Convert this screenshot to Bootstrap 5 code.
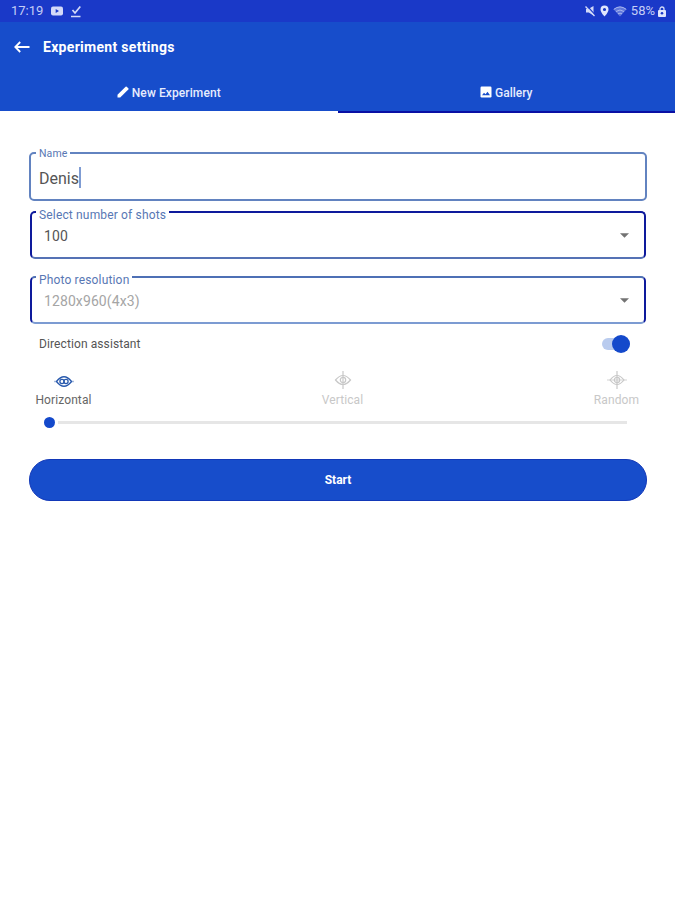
<!DOCTYPE html>
<html lang="en">
<head>
  <meta charset="UTF-8">
  <meta name="viewport" content="width=device-width, initial-scale=1">
  <title>Experiment settings</title>
  <link href="https://cdn.jsdelivr.net/npm/bootstrap@5.3.3/dist/css/bootstrap.min.css" rel="stylesheet">
  <style>
    body { font-family: Roboto, "Noto Sans", sans-serif; background: #fff; color: #555; font-size: 12px; line-height: 16px; }
    svg { display: block; flex: none; }

    .status-bar { height: 22px; background: #1a39c8; color: #c5cef6; font-size: 13px; padding: 0 9px 0 11px; }
    .lock { margin-left: 3px; }
    .app-bar { height: 50px; background: #174dcb; padding-left: 14px; }
    .app-title { font-size: 14px; font-weight: 700; margin: 0 0 0 13px; line-height: 20px; letter-spacing: .3px; }

    .tab-strip { height: 41px; background: #174dcb; }
    .tab-strip .nav-link { height: 41px; padding: 2px 0 0; color: #e6ecfd; font-weight: 500; border-bottom: 2px solid #0a0fa4; border-radius: 0; }
    .tab-strip .nav-link.active { border-bottom-color: #fff; }
    .tab-strip svg { margin-bottom: 2px; }
    .tab-new { letter-spacing: .1px; }

    .settings { padding: 39px 28px 0 29px; }
    .outlined { position: relative; border: 2px solid #6283c0; border-radius: 5px; }
    .outlined label { position: absolute; left: 5px; background: #fff; padding: 0 3px; line-height: 13px; color: #5877b4; white-space: nowrap; }
    .field-name { height: 49px; padding-left: 8px; }
    .field-name label { top: -7px; font-size: 10.5px; letter-spacing: .1px; }
    .field-name .value { font-size: 16px; line-height: 20px; padding-top: 4px; }
    .caret { width: 2px; height: 21px; background: #7f9cd3; margin-top: 2px; }
    .field-select { height: 48px; margin: 0 1px; padding: 0 15px 0 12px; border-color: #0e1a9c #0e1a9c #5572b5; }
    .field-select label { top: -4px; left: 4px; font-size: 12px; letter-spacing: .16px; }
    .field-select .value { font-size: 14px; letter-spacing: .1px; padding-top: 1px; }
    .field-shots { margin-top: 10px; }
    .field-photo { margin-top: 17px; border-top-color: #4e70b5; border-bottom-color: #7c9bd2; }
    .field-photo .value { color: #a5a5a5; }

    .assistant { height: 40px; padding: 0 17px 0 10px; }
    .assistant span { letter-spacing: .1px; }
    .toggle { width: 28px; height: 12px; border-radius: 6px; background: #b9cbee; }
    .toggle i { width: 18px; height: 18px; border-radius: 50%; background: #1449cb; }

    .directions { height: 50px; padding: 7px 2px 0 6px; color: #c8c8c8; }
    .directions > div { width: 57px; }
    .directions .picked { color: #666; }
    .directions .picked svg { color: #2859ad; }
    .directions span { margin-top: 3px; letter-spacing: .1px; }
    .directions .middle { margin-left: 5px; }

    .slider { height: 16px; padding: 0 20px 0 15px; }
    .slider i { width: 11px; height: 11px; border-radius: 50%; background: #1449cb; }
    .slider b { height: 3px; background: #e6e6e6; margin-left: 3px; }

    .btn-start { height: 42px; margin-top: 29px; background: #174dcb; color: #fff; font-size: 12px; font-weight: 700; border: 1px solid #1238b8; border-radius: 21px; }
    .btn-start:hover { background: #1238b8; color: #fff; }
  </style>
</head>
<body>
  <header>
    <div class="status-bar d-flex align-items-center justify-content-between">
      <div class="d-flex align-items-center">
        <span>17:19</span>
        <svg class="ms-2" width="12" height="10" viewBox="0 0 12 10"><rect width="12" height="9" y=".5" rx="2" fill="#d3daf8"/><path d="M4.7 3v4L8 5z" fill="#1a39c8"/></svg>
        <svg class="ms-2" width="10" height="13" viewBox="0 0 10 13" fill="none" stroke="#d3daf8" stroke-width="1.7"><path d="M1.5 5L4 8l5.300-6.500M0 11.500h9.500"/></svg>
      </div>
      <div class="d-flex align-items-center">
        <svg width="11" height="12" viewBox="0 0 11 12"><path d="M1 4h2.300L8.500 1v9.500L3.800 7.500H1z" fill="#d3daf8"/><path d="M1.700.5l9 10" stroke="#1a39c8" stroke-width="1.200"/><path d="M.5 1.500l9 9.500" stroke="#d3daf8" stroke-width="1.300"/></svg>
        <svg class="ms-1" width="9" height="12" viewBox="0 0 9 12"><path d="M4.500.5a4 4 0 0 0-4 4c0 3 4 7 4 7s4-4 4-7a4 4 0 0 0-4-4zm0 2.400a1.600 1.600 0 1 1 0 3.200 1.600 1.600 0 0 1 0-3.200z" fill="#e0e6fc" fill-rule="evenodd"/></svg>
        <svg class="ms-1" width="14" height="11" viewBox="0 0 14 11"><path d="M.5 3.200Q7-2 13.500 3.200L7 10.500z" fill="#6078dc"/><path d="M.8 3.300Q7-1.500 13.200 3.300M3 5.500Q7 2.500 11 5.500M5 7.800Q7 6.500 9 7.800" fill="none" stroke="#a9b7f0"/></svg>
        <span class="ms-1">58%</span>
        <svg class="lock" width="8" height="11" viewBox="0 0 8 11"><path d="M2 5V3a2 2 0 0 1 4 0v2" fill="none" stroke="#d3daf8" stroke-width="1.300"/><rect y="4" width="8" height="7" rx="1" fill="#e0e6fc"/><circle cx="4" cy="7.300" r="1.300" fill="#1a39c8"/></svg>
      </div>
    </div>
    <div class="app-bar d-flex align-items-center text-white">
      <svg width="16" height="12" viewBox="0 0 16 12" fill="none" stroke="#fff" stroke-width="1.800"><path d="M15.500 6H1.500M6.200 1L1.300 6l4.900 5"/></svg>
      <h1 class="app-title">Experiment settings</h1>
    </div>
    <nav class="tab-strip nav nav-fill flex-nowrap">
      <a class="nav-link active w-50 d-flex align-items-center justify-content-center" href="#">
        <svg width="12" height="12" viewBox="0 0 12 12" fill="#fff"><path d="M.5 8.800V11.500h2.700L11.300 3.400a.8.800 0 0 0 0-1.100L9.700.7a.8.800 0 0 0-1.100 0z"/></svg>
        <span class="tab-new">&nbsp;New Experiment</span>
      </a>
      <a class="nav-link w-50 d-flex align-items-center justify-content-center" href="#">
        <svg width="12" height="12" viewBox="0 0 12 12"><rect x=".5" y=".5" width="11" height="11" rx="1.200" fill="#fff"/><path d="M2 9.300l2-2.500 1.500 1.500L7.500 5.800 10 9.300z" fill="#174dcb"/></svg>
        <span>&nbsp;Gallery</span>
      </a>
    </nav>
  </header>

  <main class="settings">
    <div class="outlined field-name d-flex align-items-center">
      <label>Name</label>
      <span class="value">Denis</span><span class="caret"></span>
    </div>
    <div class="outlined field-select field-shots d-flex align-items-center justify-content-between">
      <label>Select number of shots</label>
      <span class="value">100</span>
      <svg width="9" height="5" viewBox="0 0 10 5"><path d="M0 0h10L5 5z" fill="#737373"/></svg>
    </div>
    <div class="outlined field-select field-photo d-flex align-items-center justify-content-between">
      <label>Photo resolution</label>
      <span class="value">1280x960(4x3)</span>
      <svg width="9" height="5" viewBox="0 0 10 5"><path d="M0 0h10L5 5z" fill="#737373"/></svg>
    </div>

    <div class="assistant d-flex align-items-center justify-content-between">
      <span>Direction assistant</span>
      <div class="toggle d-flex align-items-center justify-content-end"><i></i></div>
    </div>

    <div class="directions d-flex justify-content-between">
      <div class="picked d-flex flex-column align-items-center">
        <svg width="20" height="18" viewBox="0 0 20 18" fill="none" stroke="currentColor" stroke-width="1.300"><path d="M2.500 10.500q7.500-9.500 15 0q-7.500 9.500-15 0z"/><circle cx="8" cy="10.500" r="2.100"/><circle cx="12" cy="10.500" r="2.100"/><path d="M0 10.500h3M17 10.500h3" opacity=".4"/></svg>
        <span>Horizontal</span>
      </div>
      <div class="middle d-flex flex-column align-items-center">
        <svg width="20" height="18" viewBox="0 0 20 18" fill="none" stroke="currentColor" stroke-width="1.200"><path d="M2.500 9q7.500-9 15 0q-7.500 9-15 0z"/><circle cx="10" cy="9" r="2.700"/><path d="M10 0v18"/></svg>
        <span>Vertical</span>
      </div>
      <div class="d-flex flex-column align-items-center">
        <svg width="20" height="18" viewBox="0 0 20 18" fill="none" stroke="currentColor" stroke-width="1.200"><path d="M3 9q7-9 14 0q-7 9-14 0z"/><circle cx="10" cy="9" r="2.700"/><path d="M10 0v18"/><path d="M0 9h20" stroke-width=".8"/></svg>
        <span>Random</span>
      </div>
    </div>
    <div class="slider d-flex align-items-center"><i></i><b class="flex-grow-1"></b></div>

    <button type="button" class="btn btn-start w-100 p-0">Start</button>
  </main>

  <script src="https://cdn.jsdelivr.net/npm/bootstrap@5.3.3/dist/js/bootstrap.bundle.min.js"></script>
</body>
</html>
